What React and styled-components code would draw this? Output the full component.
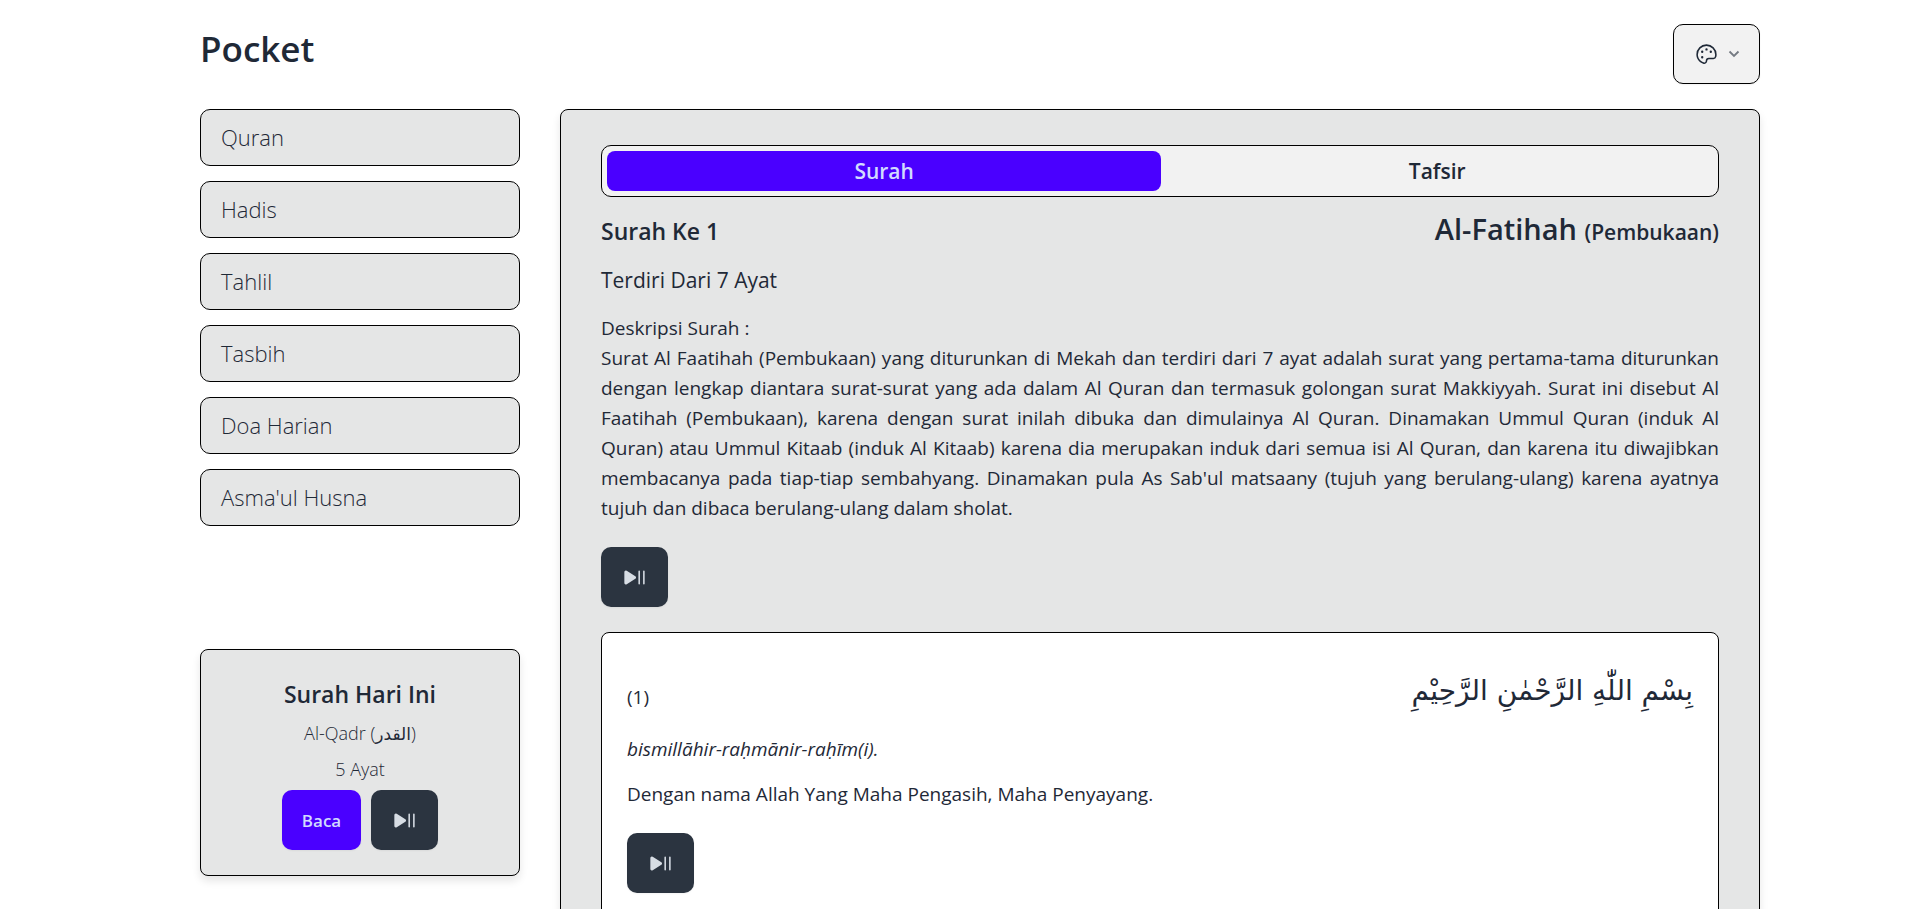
import React from "react";
import styled, { createGlobalStyle } from "styled-components";
import { PiPalette, PiPlayPauseFill } from "react-icons/pi";

const GlobalStyle = createGlobalStyle`
  *, *::before, *::after { box-sizing: border-box; }
  body {
    margin: 0;
    background: #ffffff;
    color: #1f2937;
    font-family: "Open Sans", "Noto Sans", "DejaVu Sans", sans-serif;
    font-size: 19px;
    line-height: 30px;
  }
  h1, h2, h3, p { margin: 0; font-weight: inherit; }
  button { font: inherit; cursor: pointer; }
`;

const Page = styled.div`
  display: grid;
  grid-template-columns: 320px minmax(0, 1fr);
  column-gap: 40px;
  padding: 24px 158px 40px 200px;
`;

const Header = styled.header`
  grid-column: 1 / -1;
  display: flex;
  justify-content: space-between;
  align-items: flex-start;
  height: 85px;
`;

const Brand = styled.h1`
  font-size: 35px;
  line-height: 50px;
  font-weight: 600;
`;

const ThemeButton = styled.button`
  display: flex;
  align-items: center;
  gap: 9px;
  height: 60px;
  padding: 0 19px 0 20px;
  border: 1px solid #000000;
  border-radius: 10px;
  background: #f2f2f2;
  color: #1f2937;
  box-shadow: 0 1px 2px rgba(0, 0, 0, 0.05);
`;

const Sidebar = styled.aside`
  display: flex;
  flex-direction: column;
`;

const Nav = styled.nav`
  display: flex;
  flex-direction: column;
  gap: 15px;
`;

const NavLink = styled.a`
  height: 57px;
  padding: 0 20px;
  border: 1px solid #000000;
  border-radius: 10px;
  background: #e5e6e6;
  color: inherit;
  font-size: 22px;
  font-weight: 300;
  line-height: 54px;
  text-decoration: none;
`;

const DailyCard = styled.section`
  display: flex;
  flex-direction: column;
  align-items: center;
  margin-top: 123px;
  padding: 24px 20px 25px;
  border: 1px solid #000000;
  border-radius: 8px;
  background: #e5e6e6;
  box-shadow: 0 5px 8px rgba(0, 0, 0, 0.1);
  font-size: 18px;
  font-weight: 300;
  line-height: 35px;
`;

const DailyTitle = styled.h2`
  margin-bottom: 2px;
  font-size: 23px;
  font-weight: 600;
  line-height: 40px;
`;

const ArabicName = styled.bdi`
  font-family: "DejaVu Sans", sans-serif;
  font-size: 17px;
  font-weight: 400;
`;

const Actions = styled.div`
  display: flex;
  gap: 10px;
  margin-top: 3px;
`;

const Button = styled.button`
  display: flex;
  align-items: center;
  justify-content: center;
  height: 60px;
  padding: 0 ${(p) => (p.$primary ? 20 : 21)}px;
  border: 0;
  border-radius: 10px;
  background: ${(p) => (p.$primary ? "#4a00ff" : "#2b3440")};
  color: ${(p) => (p.$primary ? "#d1dbff" : "#d7dde4")};
  font-size: 17px;
  font-weight: 600;
  box-shadow: 0 1px 2px rgba(0, 0, 0, 0.05);
`;

const Panel = styled.main`
  display: flex;
  flex-direction: column;
  padding: 35px 40px 40px;
  border: 1px solid #000000;
  border-radius: 8px;
  background: #e5e6e6;
  box-shadow: 0 5px 8px rgba(0, 0, 0, 0.1);
`;

const Tabs = styled.div`
  display: grid;
  grid-template-columns: auto auto;
  padding: 5px;
  border: 1px solid #000000;
  border-radius: 10px;
  background: #f2f2f2;
`;

const Tab = styled.button`
  height: 40px;
  padding: 0;
  border: 0;
  border-radius: 8px;
  background: ${(p) => (p.$active ? "#4a00ff" : "transparent")};
  color: ${(p) => (p.$active ? "#d1dbff" : "#1f2937")};
  font-size: 21px;
  font-weight: 600;
  line-height: 40px;
`;

const SurahHeader = styled.div`
  display: flex;
  justify-content: space-between;
  align-items: baseline;
  margin-top: 7px;
  font-size: 23px;
  font-weight: 600;
  line-height: 50px;
`;

const SurahName = styled.h2`
  font-size: 29px;
  font-weight: 600;

  small { font-size: 21px; }
`;

const VerseCount = styled.p`
  margin-top: 8px;
  font-size: 21px;
  line-height: 30px;
`;

const Description = styled.p`
  margin-top: 18px;
  text-align: justify;
`;

const PlayRow = styled.div`
  display: flex;
  margin-top: 24px;
`;

const VerseCard = styled.article`
  margin-top: 25px;
  padding: 33px 25px 25px;
  border: 1px solid #000000;
  border-radius: 8px;
  background: #ffffff;
`;

const VerseHeader = styled.div`
  display: flex;
  justify-content: space-between;
  align-items: flex-end;
`;

const VerseNumber = styled.p`
  line-height: 38px;
`;

const Arabic = styled.p`
  font-family: "DejaVu Sans", sans-serif;
  font-size: 28px;
  line-height: 50px;
`;

const Latin = styled.p`
  margin-top: 18px;
  font-style: italic;
`;

const Translation = styled.p`
  margin-top: 15px;
`;

const Chevron = () => (
  <svg width="12" height="12" viewBox="0 0 12 12" fill="none" stroke="#1f2937" strokeOpacity="0.6" strokeWidth="1.8" aria-hidden="true">
    <path d="M1.5 3.5 6 8l4.5-4.5" />
  </svg>
);

const PlayButton = () => (
  <Button type="button" aria-label="Putar atau jeda">
    <PiPlayPauseFill size={25} />
  </Button>
);

const menu = ["Quran", "Hadis", "Tahlil", "Tasbih", "Doa Harian", "Asma'ul Husna"];

export default function App() {
  return (
    <>
      <GlobalStyle />
      <Page>
        <Header>
          <Brand>Pocket</Brand>
          <ThemeButton type="button" aria-label="Tema">
            <PiPalette size={25} />
            <Chevron />
          </ThemeButton>
        </Header>
        <Sidebar>
          <Nav>
            {menu.map((item) => (
              <NavLink key={item} href="#">{item}</NavLink>
            ))}
          </Nav>
          <DailyCard>
            <DailyTitle>Surah Hari Ini</DailyTitle>
            <p>Al-Qadr (<ArabicName lang="ar">القدر</ArabicName>)</p>
            <p>5 Ayat</p>
            <Actions>
              <Button type="button" $primary>Baca</Button>
              <PlayButton />
            </Actions>
          </DailyCard>
        </Sidebar>
        <Panel>
          <Tabs role="tablist">
            <Tab type="button" role="tab" aria-selected="true" $active>Surah</Tab>
            <Tab type="button" role="tab" aria-selected="false">Tafsir</Tab>
          </Tabs>
          <SurahHeader>
            <p>Surah Ke 1</p>
            <SurahName>Al-Fatihah <small>(Pembukaan)</small></SurahName>
          </SurahHeader>
          <VerseCount>Terdiri Dari 7 Ayat</VerseCount>
          <Description>
            Deskripsi Surah :<br />
            Surat Al Faatihah (Pembukaan) yang diturunkan di Mekah dan terdiri dari 7 ayat adalah surat yang pertama-tama diturunkan dengan lengkap diantara surat-surat yang ada dalam Al Quran dan termasuk golongan surat Makkiyyah. Surat ini disebut Al Faatihah (Pembukaan), karena dengan surat inilah dibuka dan dimulainya Al Quran. Dinamakan Ummul Quran (induk Al Quran) atau Ummul Kitaab (induk Al Kitaab) karena dia merupakan induk dari semua isi Al Quran, dan karena itu diwajibkan membacanya pada tiap-tiap sembahyang. Dinamakan pula As Sab'ul matsaany (tujuh yang berulang-ulang) karena ayatnya tujuh dan dibaca berulang-ulang dalam sholat.
          </Description>
          <PlayRow><PlayButton /></PlayRow>
          <VerseCard>
            <VerseHeader>
              <VerseNumber>(1)</VerseNumber>
              <Arabic lang="ar" dir="rtl">بِسْمِ اللّٰهِ الرَّحْمٰنِ الرَّحِيْمِ</Arabic>
            </VerseHeader>
            <Latin>bismillāhir-raḥmānir-raḥīm(i).</Latin>
            <Translation>Dengan nama Allah Yang Maha Pengasih, Maha Penyayang.</Translation>
            <PlayRow><PlayButton /></PlayRow>
          </VerseCard>
        </Panel>
      </Page>
    </>
  );
}
